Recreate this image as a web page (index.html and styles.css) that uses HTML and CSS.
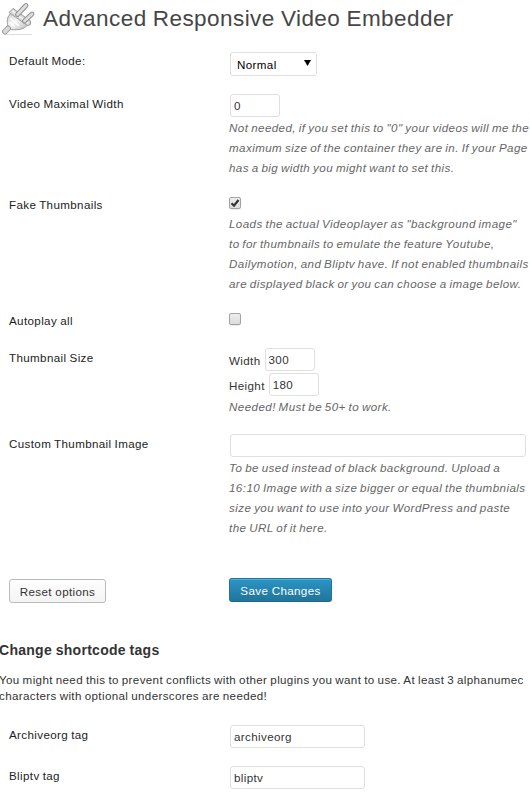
FILE: index.html
```html
<!DOCTYPE html>
<html lang="en">
<head>
<meta charset="utf-8">
<title>Advanced Responsive Video Embedder</title>
<link rel="stylesheet" href="styles.css">
</head>
<body>
<header class="page-header">
  <svg class="plug" width="36" height="36" viewBox="0 0 36 36">
    <defs>
      <linearGradient id="metal" x1="0" y1="0" x2="1" y2="1">
        <stop offset="0" stop-color="#c8c8c8"/><stop offset=".45" stop-color="#f5f5f5"/><stop offset="1" stop-color="#b8b8b8"/>
      </linearGradient>
    </defs>
    <path d="M4 34.500H32" stroke="#ddd" stroke-width="1"/>
    <path d="M11.500 12L8 17C6.500 21 7.500 24 8 27L10 29.500C15 30 20 30 24 28L29 24Z" fill="url(#metal)" stroke="#a0a0a0"/>
    <path d="M9 12.500L13 8.500L30.500 21V24.500L27.500 25.500Z" fill="#dadada" stroke="#999"/>
    <path d="M12.500 11L28 23" stroke="#f8f8f8" stroke-width="1.500"/>
    <path d="M17.500 14.500L26 5.500M24.500 21L32 14" stroke="#8f8f8f" stroke-width="4.800" stroke-linecap="round"/>
    <path d="M17.500 14.500L26 5.500M24.500 21L32 14" stroke="#dedede" stroke-width="2.800" stroke-linecap="round"/>
    <path d="M10 18L19 26M9.500 22L15 27" stroke="#fff" stroke-width="1.500"/>
    <path d="M8 28.500L5 31.500" stroke="#a0a0a0" stroke-width="6" stroke-linecap="round"/>
    <path d="M8 28.500L5 31.500" stroke="#d8d8d8" stroke-width="4" stroke-linecap="round"/>
  </svg>
  <h1 class="title">Advanced Responsive Video Embedder</h1>
</header>

<form class="options">
  <div class="row row-mode">
    <label class="label">Default Mode:</label>
    <div class="field"><div class="select">Normal<svg class="arrow" width="7" height="6" viewBox="0 0 7 6"><path d="M0 0H7L3.500 6Z"/></svg></div></div>
  </div>
  <div class="row row-width">
    <label class="label">Video Maximal Width</label>
    <div class="field">
      <input class="input small" type="text" value="0">
      <p class="desc">Not needed, if you set this to "0" your videos will me the<br>maximum size of the container they are in. If your Page<br>has a big width you might want to set this.</p>
    </div>
  </div>
  <div class="row row-fake">
    <label class="label">Fake Thumbnails</label>
    <div class="field">
      <span class="check"><svg width="10" height="10" viewBox="0 0 10 10"><path d="M1.500 5.200L4 7.700L8.500 2" fill="none" stroke="#333" stroke-width="2.200"/></svg></span>
      <p class="desc">Loads the actual Videoplayer as "background image"<br>to for thumbnails to emulate the feature Youtube,<br>Dailymotion, and Bliptv have. If not enabled thumbnails<br>are displayed black or you can choose a image below.</p>
    </div>
  </div>
  <div class="row row-autoplay">
    <label class="label">Autoplay all</label>
    <div class="field"><span class="check"></span></div>
  </div>
  <div class="row row-size">
    <label class="label">Thumbnail Size</label>
    <div class="field">
      <div class="dimension"><span class="dimension-name">Width</span><input class="input small" type="text" value="300"></div>
      <div class="dimension"><span class="dimension-name">Height</span><input class="input small" type="text" value="180"></div>
      <p class="desc">Needed! Must be 50+ to work.</p>
    </div>
  </div>
  <div class="row row-image">
    <label class="label">Custom Thumbnail Image</label>
    <div class="field">
      <input class="input wide" type="text">
      <p class="desc">To be used instead of black background. Upload a<br>16:10 Image with a size bigger or equal the thumbnials<br>size you want to use into your WordPress and paste<br>the URL of it here.</p>
    </div>
  </div>
  <div class="actions">
    <button class="button" type="button">Reset options</button>
    <button class="button primary" type="button">Save Changes</button>
  </div>

  <h2 class="subtitle">Change shortcode tags</h2>
  <p class="intro">You might need this to prevent conflicts with other plugins you want to use. At least 3 alphanumec<br>characters with optional underscores are needed!</p>
  <div class="row row-tag">
    <label class="label">Archiveorg tag</label>
    <div class="field"><input class="input tag" type="text" value="archiveorg"></div>
  </div>
  <div class="row row-tag">
    <label class="label">Bliptv tag</label>
    <div class="field"><input class="input tag" type="text" value="bliptv"></div>
  </div>
</form>
</body>
</html>
```
FILE: styles.css
```css
* { box-sizing: border-box; }
body {
  margin: 0;
  background: #fff;
  color: #333;
  font: 11.6px/18px "Liberation Sans", Arial, sans-serif;
  letter-spacing: .37px;
  word-spacing: -.5px;
  overflow: hidden;
}
.page-header { display: flex; height: 42px; }
.plug { flex: none; margin-right: 7px; fill: none; }
.title {
  margin: 0;
  padding-top: 4px;
  font-size: 22.5px;
  line-height: 29px;
  font-weight: 400;
  letter-spacing: .44px;
  color: #464646;
  white-space: nowrap;
}
.row {
  display: grid;
  grid-template-columns: 220px 298px;
  padding-left: 9px;
}
.row-mode { height: 43px; }
.row-width { height: 101px; }
.row-fake { height: 116px; }
.row-autoplay { height: 37px; }
.row-size { height: 86px; }
.row-image { height: 153px; }
.row-tag { height: 41px; }
.label { padding-top: 10px; color: #222; }
.field { padding-top: 9px; }
.row-mode .field { padding-top: 10px; }
.row-fake .field, .row-autoplay .field { padding-top: 11px; }
.select {
  display: flex;
  align-items: center;
  justify-content: space-between;
  width: 87px;
  height: 24px;
  margin-left: 1px;
  padding: 2px 5px 0 6px;
  border: 1px solid #dfdfdf;
  border-radius: 3px;
  color: #000;
}
.arrow { margin-top: -4px; fill: #000; }
.input {
  display: block;
  height: 23px;
  margin: 0 0 0 1px;
  padding: 0 3px;
  border: 1px solid #dfdfdf;
  border-radius: 3px;
  background: #fff;
  color: #333;
  font: inherit;
  letter-spacing: inherit;
}
.small { width: 50px; }
.wide { width: 296px; }
.tag { width: 135px; }
.desc {
  margin: 1px 0 0;
  color: #666;
  font-style: italic;
  line-height: 20px;
  letter-spacing: .42px;
  word-spacing: -.8px;
  white-space: nowrap;
}
.check {
  display: block;
  width: 12px;
  height: 12px;
  border: 1px solid #a3a3a3;
  border-radius: 2px;
  background: linear-gradient(#ededed, #dcdcdc);
  box-shadow: 0 1px 1px rgba(0, 0, 0, .08);
}
.check svg { display: block; }
.row-fake .desc { margin-top: 5px; }
.dimension { display: flex; gap: 4px; margin-bottom: 2px; }
.dimension-name { padding-top: 4px; }
.dimension .input { margin: 0; }
.row-size .desc { margin-top: -1px; }
.actions {
  display: grid;
  grid-template-columns: 220px 298px;
  align-items: start;
  justify-items: start;
  height: 62px;
  padding-left: 9px;
}
.button {
  width: 97px;
  height: 24px;
  margin-top: 1px;
  padding: 1px 0 0;
  border: 1px solid #bbb;
  border-radius: 3px;
  background: linear-gradient(#fefefe, #f4f4f4);
  color: #333;
  font: inherit;
  letter-spacing: .35px;
  white-space: nowrap;
}
.primary {
  width: 103px;
  margin-top: 0;
  border-color: #21759b #21759b #1e6a8d;
  background: linear-gradient(#2a95c5, #21759b);
  box-shadow: inset 0 1px 0 rgba(120, 200, 230, .5);
  color: #fff;
  text-shadow: 0 1px 0 rgba(0, 0, 0, .1);
}
.subtitle {
  margin: 0 0 0 -1px;
  font-size: 14px;
  line-height: 20px;
  font-weight: 700;
  letter-spacing: .28px;
}
.intro {
  height: 44px;
  margin: 12px 0 0 -1px;
  line-height: 16px;
  letter-spacing: .36px;
  word-spacing: -.6px;
  white-space: nowrap;
}
```
